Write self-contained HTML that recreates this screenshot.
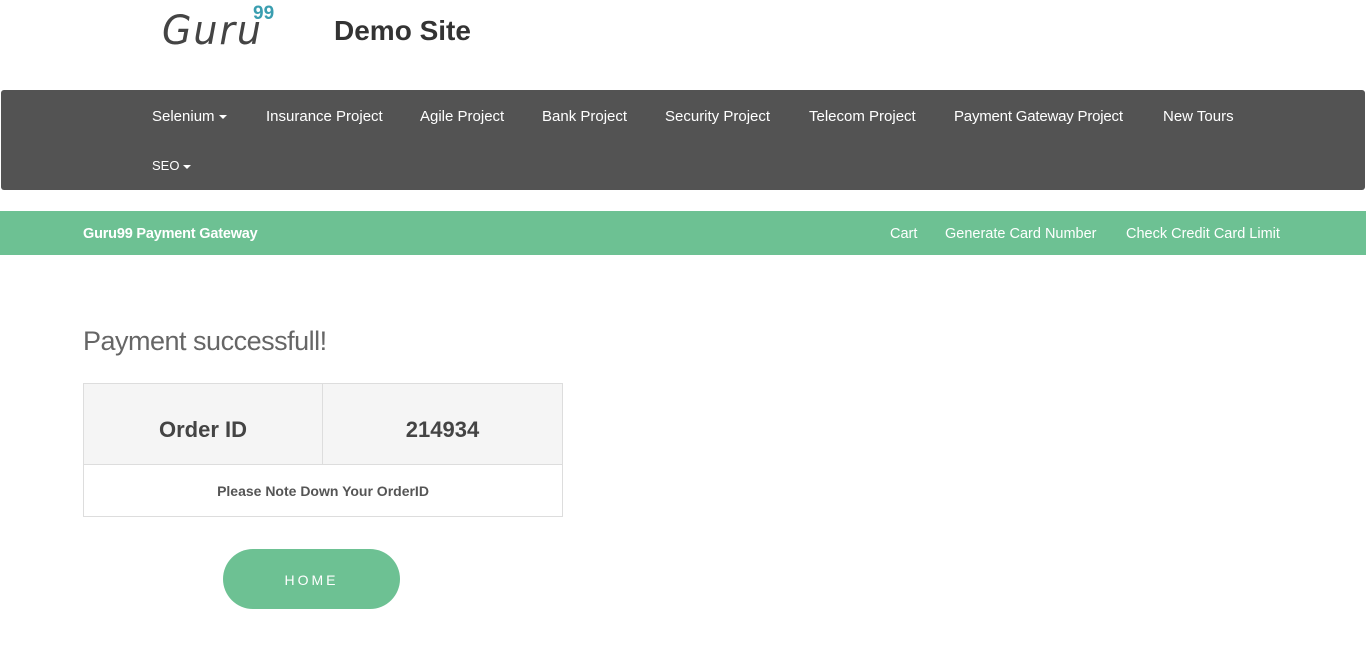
<!DOCTYPE html>
<html><head><style>
body{margin:0;width:1366px;height:652px;background:#fff;font-family:"Liberation Sans",sans-serif;position:relative;overflow:hidden;color:#444}
.a{position:absolute;white-space:nowrap}
.nav{position:absolute;left:1px;top:90px;width:1364px;height:100px;background:#535353;border-radius:3px}
.nav span{position:absolute;color:#fff;font-size:15px}
.bar{position:absolute;left:0;top:211px;width:1366px;height:44px;background:#6dc193}
.bar span{position:absolute;color:#fff;font-size:14.5px;top:15px}
.caret{display:inline-block;border-left:4px solid transparent;border-right:4px solid transparent;border-top:4px solid #fff;vertical-align:middle;margin-left:4px}
</style></head><body>
<div class="a" style="left:162px;top:8px;font-family:'DejaVu Sans',sans-serif;font-style:italic;font-size:40px;color:#444;letter-spacing:2px;transform:scaleX(.95);transform-origin:left">Guru</div>
<div class="a" style="left:253px;top:3px;font-size:19px;font-weight:bold;color:#3a9eb0">99</div>
<div class="a" style="left:334px;top:15px;font-size:28px;font-weight:bold;color:#333">Demo Site</div>
<div class="nav">
<span style="left:151px;top:18px">Selenium<i class="caret"></i></span>
<span style="left:265px;top:18px">Insurance Project</span>
<span style="left:419px;top:18px">Agile Project</span>
<span style="left:541px;top:18px">Bank Project</span>
<span style="left:664px;top:18px">Security Project</span>
<span style="left:808px;top:18px">Telecom Project</span>
<span style="left:953px;top:18px;letter-spacing:-0.2px">Payment Gateway Project</span>
<span style="left:1162px;top:18px">New Tours</span>
<span style="left:151px;top:68px;font-size:13px">SEO<i class="caret"></i></span>
</div>
<div class="bar">
<span style="left:83px;font-weight:bold;letter-spacing:-0.2px">Guru99 Payment Gateway</span>
<span style="left:890px">Cart</span>
<span style="left:945px">Generate Card Number</span>
<span style="left:1126px">Check Credit Card Limit</span>
</div>
<div class="a" style="left:83px;top:326px;font-size:27px;color:#666;letter-spacing:-0.5px">Payment successfull!</div>
<div class="a" style="left:83px;top:383px;width:478px;height:132px;border:1px solid #ddd">
<div class="a" style="left:0;top:0;width:238px;height:80px;background:#f5f5f5;border-right:1px solid #ddd;border-bottom:1px solid #ddd;text-align:center;line-height:92px;font-size:22px;font-weight:bold;color:#444">Order ID</div>
<div class="a" style="left:239px;top:0;width:239px;height:80px;background:#f5f5f5;border-bottom:1px solid #ddd;text-align:center;line-height:92px;font-size:22px;font-weight:bold;color:#444">214934</div>
<div class="a" style="left:0;top:81px;width:478px;height:51px;text-align:center;line-height:52px;font-size:14px;font-weight:bold;color:#555">Please Note Down Your OrderID</div>
</div>
<div class="a" style="left:223px;top:549px;width:177px;height:60px;border-radius:30px;background:#6dc193;color:#fff;text-align:center;line-height:62px;font-size:14px;letter-spacing:3px">HOME</div>
</body></html>
